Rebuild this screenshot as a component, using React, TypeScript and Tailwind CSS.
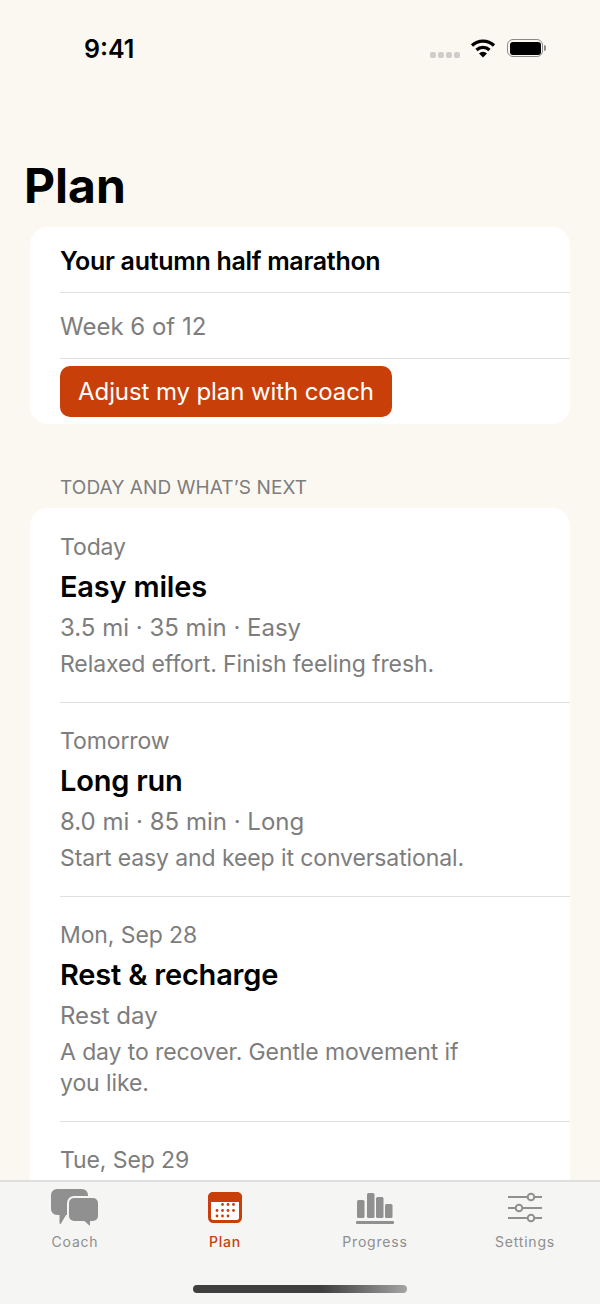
const workouts = [
  { day: "Today", title: "Easy miles", meta: "3.5 mi · 35 min · Easy", note: ["Relaxed effort. Finish feeling fresh."] },
  { day: "Tomorrow", title: "Long run", meta: "8.0 mi · 85 min · Long", note: ["Start easy and keep it conversational."] },
  { day: "Mon, Sep 28", title: "Rest & recharge", meta: "Rest day", note: ["A day to recover. Gentle movement if", "you like."] },
];

function CoachIcon() {
  return (
    <svg width="48" height="38" viewBox="0 0 48 38" className="mt-[7px] text-[#8f908f]" fill="currentColor">
      <path d="M6 0h25a6 6 0 0 1 6 6v14a6 6 0 0 1-6 6H15l-5 8.500c-.5.8-1.500.5-1.500-.5V26H6a6 6 0 0 1-6-6V6a6 6 0 0 1 6-6z" />
      <path
        d="M23 8h19a6 6 0 0 1 6 6v13a6 6 0 0 1-6 6h-2v4c0 1-1 1.300-1.600.6L33 33H23a6 6 0 0 1-6-6V14a6 6 0 0 1 6-6z"
        stroke="#f5f5f4"
        strokeWidth="2"
      />
    </svg>
  );
}

function CalendarIcon() {
  const dots = [
    [14.500, 12.500], [20, 12.500], [25.500, 12.500],
    [9, 18.500], [14.500, 18.500], [20, 18.500], [25.500, 18.500],
    [9, 24], [14.500, 24], [20, 24],
  ];
  return (
    <svg width="34" height="31" viewBox="0 0 34 31" className="mt-[10px]" fill="none">
      <rect x="1.500" y="1.500" width="31" height="28" rx="4" fill="#fff" stroke="#c83f0a" strokeWidth="3" />
      <path d="M5 0h24a5 5 0 0 1 5 5v5H0V5a5 5 0 0 1 5-5z" fill="#c83f0a" />
      {dots.map(([x, y]) => (
        <circle key={`${x}-${y}`} cx={x} cy={y} r="1.400" fill="#c83f0a" />
      ))}
    </svg>
  );
}

function ProgressIcon() {
  return (
    <svg width="38" height="31" viewBox="0 0 38 31" className="mt-[11px] text-[#8f908f]" fill="currentColor">
      <rect x="1" y="7" width="7.500" height="18" rx="1.500" />
      <rect x="11" y="0" width="7.500" height="25" rx="1.500" />
      <rect x="20" y="4" width="7.500" height="21" rx="1.500" />
      <rect x="29" y="11" width="7.500" height="14" rx="1.500" />
      <rect x="0" y="28" width="38" height="3" rx="1" />
    </svg>
  );
}

function SettingsIcon() {
  return (
    <svg width="34" height="32" viewBox="0 0 34 32" className="mt-[10px]" fill="none" stroke="#8f908f" strokeWidth="2">
      <path d="M0 5h34M0 16h34M0 26h34" />
      <circle cx="23" cy="5" r="3.300" fill="#f5f5f4" />
      <circle cx="11" cy="16" r="3.300" fill="#f5f5f4" />
      <circle cx="23" cy="26" r="3.300" fill="#f5f5f4" />
    </svg>
  );
}

function Tab({ icon, label, active }: { icon: React.ReactNode; label: string; active?: boolean }) {
  return (
    <div className="flex w-[150px] flex-col items-center">
      <div className="flex h-[46px] items-start justify-center">{icon}</div>
      <span className={`mt-[5px] text-[14px] leading-[18px] tracking-[0.8px] ${active ? "font-medium text-[#c83f0a]" : "text-[#8e8e8e]"}`}>
        {label}
      </span>
    </div>
  );
}

export default function App() {
  return (
    <div className="relative h-[1304px] w-[600px] overflow-hidden bg-[#fbf8f2] font-['Inter',sans-serif] text-black">
      {/* Status bar */}
      <div className="flex h-[96px] items-start justify-between pl-[84px] pr-[54px] pt-[34px]">
        <span className="text-[25px] font-semibold leading-[30px]">9:41</span>
        <div className="flex items-start">
          <div className="mr-[10px] mt-[18px] flex gap-[2px]">
            <span className="h-[6px] w-[6px] rounded-[2px] bg-[#cfcdca]" />
            <span className="h-[6px] w-[6px] rounded-[2px] bg-[#cfcdca]" />
            <span className="h-[6px] w-[6px] rounded-[2px] bg-[#cfcdca]" />
            <span className="h-[6px] w-[6px] rounded-[2px] bg-[#cfcdca]" />
          </div>
          <svg width="26" height="20" viewBox="0 0 26 20" className="mt-[4px]" fill="none" stroke="#000" strokeWidth="3.200">
            <path d="M2 7.500a16 16 0 0 1 22 0" />
            <path d="M6.500 12a9.500 9.500 0 0 1 13 0" />
            <path d="M13 19.500l-4-4a5.600 5.600 0 0 1 8 0z" fill="#000" stroke="none" />
          </svg>
          <div className="ml-[11px] mt-[5px] flex items-center">
            <div className="h-[18px] w-[36px] rounded-[6px] border-[1.500px] border-[#8c8a86] p-[1.500px]">
              <div className="h-full w-full rounded-[3px] bg-black" />
            </div>
            <div className="ml-[1px] h-[6px] w-[2px] rounded-r-full bg-[#8c8a86]" />
          </div>
        </div>
      </div>

      <h1 className="ml-[24px] mt-[61px] text-[48px] font-bold leading-[58px]">Plan</h1>

      {/* Plan summary */}
      <section className="mx-[30px] mt-[12px] h-[197px] rounded-[18px] bg-white pl-[30px]">
        <div className="flex h-[66px] items-center border-b border-[#dfdfdf] pt-[4px] text-[25px] font-semibold tracking-[-0.3px]">
          Your autumn half marathon
        </div>
        <div className="flex h-[66px] items-center border-b border-[#dfdfdf] pt-[3px] text-[24px] text-[#7d7d7d]">Week 6 of 12</div>
        <button className="mt-[7px] flex h-[51px] w-[332px] items-center justify-center rounded-[10px] bg-[#c83f0a] pt-[1px] text-[24px] tracking-[-0.1px] text-white">
          Adjust my plan with coach
        </button>
      </section>

      <div className="ml-[60px] mt-[52px] text-[19px] leading-[24px] tracking-[0.1px] text-[#7d7d7d]">TODAY AND WHAT’S NEXT</div>

      {/* Upcoming workouts */}
      <section className="mx-[30px] mt-[8px] rounded-[18px] bg-white pl-[30px] pt-[1px]">
        {workouts.map((w) => (
          <div key={w.title} className="border-b border-[#dfdfdf] pb-[22px] pt-[22px]">
            <div className="text-[23px] leading-[32px] tracking-[-0.1px] text-[#7d7d7d]">{w.day}</div>
            <div className="mt-[6px] text-[29px] font-semibold leading-[36px] tracking-[-0.2px]">{w.title}</div>
            <div className="mt-[7px] text-[24px] leading-[32px] text-[#7d7d7d]">{w.meta}</div>
            <div className="mt-[5px] text-[23px] leading-[31px] tracking-[-0.1px] text-[#7d7d7d]">
              {w.note.map((line) => (
                <div key={line}>{line}</div>
              ))}
            </div>
          </div>
        ))}
        <div className="pb-[60px] pt-[22px] text-[23px] leading-[32px] tracking-[-0.1px] text-[#7d7d7d]">Tue, Sep 29</div>
      </section>

      {/* Tab bar */}
      <nav className="absolute bottom-0 left-0 h-[124px] w-full border-t-2 border-[#dedede] bg-[#f5f5f4]">
        <div className="flex">
          <Tab icon={<CoachIcon />} label="Coach" />
          <Tab icon={<CalendarIcon />} label="Plan" active />
          <Tab icon={<ProgressIcon />} label="Progress" />
          <Tab icon={<SettingsIcon />} label="Settings" />
        </div>
        <div className="absolute bottom-[11px] left-[193px] h-[8px] w-[214px] rounded-full bg-gradient-to-r from-[#3f3f3f] from-60% to-[#a5a5a5]" />
      </nav>
    </div>
  );
}
